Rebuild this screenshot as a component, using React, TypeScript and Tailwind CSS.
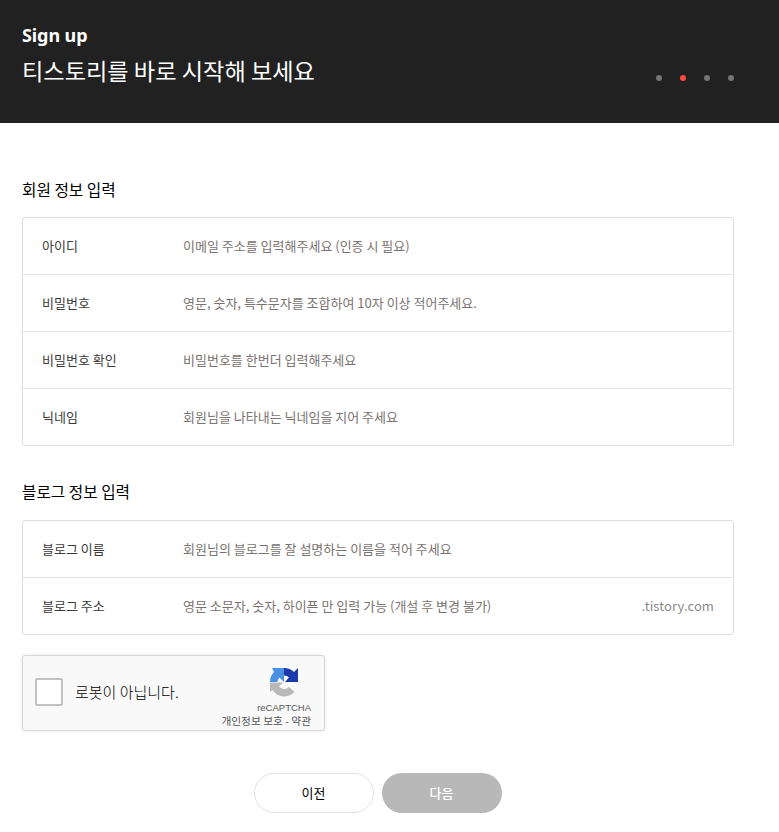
import React from "react";

const kr = "font-['Noto_Sans_CJK_KR','Noto_Sans',sans-serif]";

function Row({ label, hint, suffix }: { label: string; hint: string; suffix?: string }) {
  return (
    <div className="flex items-center h-[57px] last:h-[56px] pl-[19px] pr-[19px] pb-[1px] border-b border-[#e3e3e3] last:border-b-0 text-[13px]">
      <span className="w-[141px] text-[#3a3a3a]">{label}</span>
      <span className="flex-1 text-[#7b7370]">{hint}</span>
      {suffix && <span className="text-[#8a8a8a] text-[13px] tracking-[0.1px]">{suffix}</span>}
    </div>
  );
}

function RecaptchaLogo() {
  return (
    <svg width="30" height="32" viewBox="0 0 30 32">
      <path d="M1 15 A14 14 0 0 1 5 5 L3 1 H15 V15 L10.5 10.5 A6.5 6.5 0 0 0 8.5 15 Z" fill="#4a90e2" />
      <path d="M15 1 A14 14 0 0 1 25 5 L29 1 V15 H16 L20 10.5 A6.5 6.5 0 0 0 15 8.5 Z" fill="#1c3aa9" />
      <path d="M1 15.5 H14 L10 19.5 A6.5 6.5 0 0 0 20 20 L25.5 25 A14 14 0 0 1 3.5 23 L1 25 Z" fill="#b9b9b9" />
    </svg>
  );
}

export default function App() {
  return (
    <div className={`${kr} bg-white min-h-[832px] w-[779px] overflow-hidden`}>
      <div className="bg-[#212121] h-[123px] px-[22px] pt-[22px] flex justify-between">
        <div>
          <h2 className="font-['Noto_Sans',sans-serif] font-bold text-[18px] leading-[26px] tracking-[-0.1px] text-white">Sign up</h2>
          <p className="text-[23.2px] leading-[34px] mt-[5px] font-normal text-white">티스토리를 바로 시작해 보세요</p>
        </div>
        <div className="flex gap-[18px] mt-[53px] mr-[23px] h-[6px]">
          <span className="w-[6px] h-[6px] rounded-full bg-[#757575]" />
          <span className="w-[6px] h-[6px] rounded-full bg-[#ff4b3e]" />
          <span className="w-[6px] h-[6px] rounded-full bg-[#757575]" />
          <span className="w-[6px] h-[6px] rounded-full bg-[#757575]" />
        </div>
      </div>

      <div className="px-[22px] w-[756px]">
        <h3 className="text-[15.7px] leading-[22px] text-black mt-[56px] mb-[16px]">회원 정보 입력</h3>
        <div className="border border-[#dedede] rounded-[3px]">
          <Row label="아이디" hint="이메일 주소를 입력해주세요 (인증 시 필요)" />
          <Row label="비밀번호" hint="영문, 숫자, 특수문자를 조합하여 10자 이상 적어주세요." />
          <Row label="비밀번호 확인" hint="비밀번호를 한번더 입력해주세요" />
          <Row label="닉네임" hint="회원님을 나타내는 닉네임을 지어 주세요" />
        </div>

        <h3 className="text-[15.7px] leading-[22px] text-black mt-[35px] mb-[17px]">블로그 정보 입력</h3>
        <div className="border border-[#dedede] rounded-[3px]">
          <Row label="블로그 이름" hint="회원님의 블로그를 잘 설명하는 이름을 적어 주세요" />
          <Row label="블로그 주소" hint="영문 소문자, 숫자, 하이픈 만 입력 가능 (개설 후 변경 불가)" suffix=".tistory.com" />
        </div>

        <div className="mt-5 w-[303px] h-[76px] bg-[#f9f9f9] border border-[#d6d6d6] rounded-[3px] shadow-[0_0_4px_rgba(0,0,0,0.08)] flex justify-between">
          <div className="flex items-center pl-3 pb-[2px]">
            <span className="w-[28px] h-[28px] bg-white border-2 border-[#c1c1c1] rounded-[2px]" />
            <span className="ml-[12px] text-[15px] font-light text-black">로봇이 아닙니다.</span>
          </div>
          <div className="flex flex-col items-end pr-[13px] pt-[11px]">
            <div className="mr-[12px] h-[32px]">
              <RecaptchaLogo />
            </div>
            <span className="font-['Liberation_Sans',sans-serif] text-[9.5px] leading-[12px] mt-[3px] text-[#555]">reCAPTCHA</span>
            <span className="text-[10.7px] leading-[12px] mt-[1px] text-[#555] whitespace-nowrap">개인정보 보호 - 약관</span>
          </div>
        </div>

        <div className="flex justify-center gap-2 mt-[42px] pr-[1px]">
          <button className="w-[120px] h-[40px] rounded-full bg-white border border-[#e3e3e3] text-[13px] text-black">이전</button>
          <button className="w-[120px] h-[40px] rounded-full bg-[#b8b8b8] text-[13px] font-medium text-white">다음</button>
        </div>
      </div>
    </div>
  );
}
